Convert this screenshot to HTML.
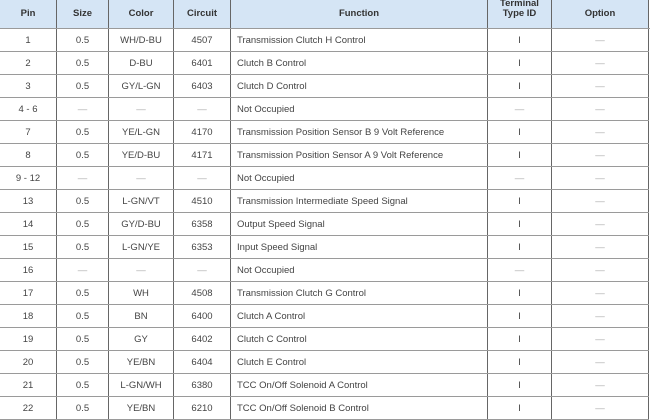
<!DOCTYPE html>
<html><head><style>
body{margin:0;background:#fff;width:650px;height:420px;overflow:hidden;font-family:"Liberation Sans",sans-serif;}
table{position:absolute;left:-1px;top:-1px;border-collapse:collapse;table-layout:fixed;width:650px;}
td,th{border:1px solid #9a9a9a;border-left-color:#666;border-right-color:#666;font-size:9.5px;color:#444;text-align:center;padding:0;height:22px;white-space:nowrap;overflow:hidden;}
th{background:#d5e5f5;font-weight:bold;color:#333;height:28px;line-height:10px;}
td.f{text-align:left;padding-left:6px;}
td.d{color:#aaa;}
</style></head><body>
<table>
<colgroup><col style="width:57px"><col style="width:52px"><col style="width:65px"><col style="width:57px"><col style="width:257px"><col style="width:64px"><col style="width:97px"><col style="width:1px"></colgroup>
<tr><th>Pin</th><th>Size</th><th>Color</th><th>Circuit</th><th>Function</th><th><span style="position:relative;top:-5px">Terminal<br>Type ID</span></th><th>Option</th><th style="background:#fff;border-right:none;border-top:none"></th></tr>
<tr><td>1</td><td>0.5</td><td>WH/D-BU</td><td>4507</td><td class="f">Transmission Clutch H Control</td><td>I</td><td class="d">—</td></tr>
<tr><td>2</td><td>0.5</td><td>D-BU</td><td>6401</td><td class="f">Clutch B Control</td><td>I</td><td class="d">—</td></tr>
<tr><td>3</td><td>0.5</td><td>GY/L-GN</td><td>6403</td><td class="f">Clutch D Control</td><td>I</td><td class="d">—</td></tr>
<tr><td>4 - 6</td><td class="d">—</td><td class="d">—</td><td class="d">—</td><td class="f">Not Occupied</td><td class="d">—</td><td class="d">—</td></tr>
<tr><td>7</td><td>0.5</td><td>YE/L-GN</td><td>4170</td><td class="f">Transmission Position Sensor B 9 Volt Reference</td><td>I</td><td class="d">—</td></tr>
<tr><td>8</td><td>0.5</td><td>YE/D-BU</td><td>4171</td><td class="f">Transmission Position Sensor A 9 Volt Reference</td><td>I</td><td class="d">—</td></tr>
<tr><td>9 - 12</td><td class="d">—</td><td class="d">—</td><td class="d">—</td><td class="f">Not Occupied</td><td class="d">—</td><td class="d">—</td></tr>
<tr><td>13</td><td>0.5</td><td>L-GN/VT</td><td>4510</td><td class="f">Transmission Intermediate Speed Signal</td><td>I</td><td class="d">—</td></tr>
<tr><td>14</td><td>0.5</td><td>GY/D-BU</td><td>6358</td><td class="f">Output Speed Signal</td><td>I</td><td class="d">—</td></tr>
<tr><td>15</td><td>0.5</td><td>L-GN/YE</td><td>6353</td><td class="f">Input Speed Signal</td><td>I</td><td class="d">—</td></tr>
<tr><td>16</td><td class="d">—</td><td class="d">—</td><td class="d">—</td><td class="f">Not Occupied</td><td class="d">—</td><td class="d">—</td></tr>
<tr><td>17</td><td>0.5</td><td>WH</td><td>4508</td><td class="f">Transmission Clutch G Control</td><td>I</td><td class="d">—</td></tr>
<tr><td>18</td><td>0.5</td><td>BN</td><td>6400</td><td class="f">Clutch A Control</td><td>I</td><td class="d">—</td></tr>
<tr><td>19</td><td>0.5</td><td>GY</td><td>6402</td><td class="f">Clutch C Control</td><td>I</td><td class="d">—</td></tr>
<tr><td>20</td><td>0.5</td><td>YE/BN</td><td>6404</td><td class="f">Clutch E Control</td><td>I</td><td class="d">—</td></tr>
<tr><td>21</td><td>0.5</td><td>L-GN/WH</td><td>6380</td><td class="f">TCC On/Off Solenoid A Control</td><td>I</td><td class="d">—</td></tr>
<tr><td>22</td><td>0.5</td><td>YE/BN</td><td>6210</td><td class="f">TCC On/Off Solenoid B Control</td><td>I</td><td class="d">—</td></tr>
</table>
</body></html>
